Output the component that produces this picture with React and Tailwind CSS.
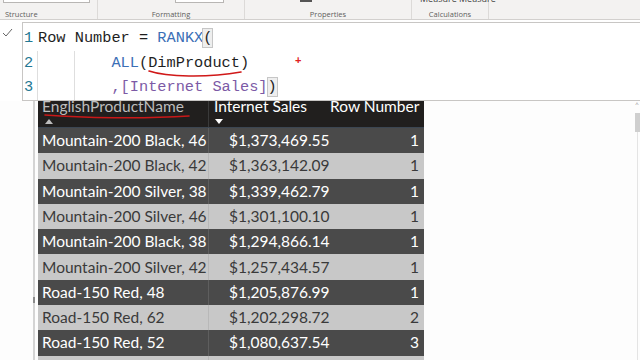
import React from 'react';

const rows = [
    ['Mountain-200 Black, 46', '$1,373,469.55', '1'],
    ['Mountain-200 Black, 42', '$1,363,142.09', '1'],
    ['Mountain-200 Silver, 38', '$1,339,462.79', '1'],
    ['Mountain-200 Silver, 46', '$1,301,100.10', '1'],
    ['Mountain-200 Black, 38', '$1,294,866.14', '1'],
    ['Mountain-200 Silver, 42', '$1,257,434.57', '1'],
    ['Road-150 Red, 48', '$1,205,876.99', '1'],
    ['Road-150 Red, 62', '$1,202,298.72', '2'],
    ['Road-150 Red, 52', '$1,080,637.54', '3'],
    ['Road-150 Red, 56', '$1,055,589.65', '4'],
];

const mono = { fontFamily: '"Liberation Mono", "DejaVu Sans Mono", monospace' };

const Ribbon = () => (
    <div className="h-[20px] bg-[#f3f2f1] border-b border-[#d2d0ce] flex text-[7.5px] text-[#605e5c] overflow-hidden" style={{ fontFamily: '"Open Sans", sans-serif' }}>
        <div className="w-[98px] border-r border-[#dcdad8] flex flex-col justify-between pb-px">
            <div className="ml-[3px] w-[87px] h-[3px] bg-white border-x border-b border-[#b8b6b4]" />
            <div className="pl-[5px] leading-none">Structure</div>
        </div>
        <div className="w-[147px] border-r border-[#dcdad8] flex flex-col justify-between pb-px">
            <div className="ml-[77px] w-[49px] h-[3px] bg-white border-x border-b border-[#b8b6b4]" />
            <div className="text-center leading-none">Formatting</div>
        </div>
        <div className="w-[167px] border-r border-[#dcdad8] flex flex-col justify-between pb-px">
            <div className="ml-[55px] w-[12px] h-[2px] bg-[#555]" />
            <div className="text-center leading-none">Properties</div>
        </div>
        <div className="w-[77px] border-r border-[#dcdad8] flex flex-col justify-between pb-px">
            <div className="-mt-[6px] ml-[8px] text-[9px] text-[#444] leading-none whitespace-nowrap">Measure Measure</div>
            <div className="text-center leading-none">Calculations</div>
        </div>
        <div className="flex-1" />
    </div>
);

const FormulaBar = () => (
    <div className="flex mt-[2px] h-[79px]">
        <div className="w-[22px] pt-[6px] pl-[2px]">
            <svg width="11" height="9" viewBox="0 0 11 9" fill="none" stroke="#666" strokeWidth="1">
                <path d="M1 5 L4 8 L10 1" />
            </svg>
        </div>
        <div className="flex-1 relative bg-white border-t border-l border-b border-[#c8c6c4] pt-[3px] text-[15.3px] leading-[24.7px] text-[#1e1e1e]" style={mono}>
            <div className="flex">
                <div className="w-[15px] pl-[1px] text-[#237893]">1</div>
                <div className="whitespace-pre">
                    Row Number = <span className="text-[#3b6fb6]">RANKX</span><span className="bg-[#eeeeee] outline outline-1 outline-[#c6c6c6]">(</span>
                </div>
            </div>
            <div className="flex">
                <div className="w-[15px] pl-[1px] text-[#237893]">2</div>
                <div className="relative whitespace-pre">
                    <span className="absolute left-[-1px] top-0 bottom-0 w-px bg-[#dedede]" />
                    <span className="absolute left-[36px] top-0 bottom-0 w-px bg-[#dedede]" />
                    {'        '}<span className="text-[#3b6fb6]">ALL</span>(DimProduct)
                </div>
            </div>
            <div className="flex">
                <div className="w-[15px] pl-[1px] text-[#237893]">3</div>
                <div className="relative whitespace-pre">
                    <span className="absolute left-[-1px] top-0 bottom-0 w-px bg-[#dedede]" />
                    <span className="absolute left-[36px] top-0 bottom-0 w-px bg-[#dedede]" />
                    {'        '}<span className="text-[#7c5aa6]">,[Internet Sales]</span><span className="bg-[#eeeeee] outline outline-1 outline-[#c6c6c6]">)</span>
                </div>
            </div>
            {/* hand-drawn marks */}
            <svg className="absolute left-[124px] top-[45px]" width="100" height="12" viewBox="0 0 100 12" fill="none" stroke="#d01818" strokeWidth="1.6" strokeLinecap="round">
                <path d="M2 3 C 20 9, 60 10, 94 4" />
            </svg>
            <div className="absolute left-[272px] top-[32px] text-[11px] leading-none text-[#e02020] font-bold" style={{ fontFamily: '"Liberation Sans", sans-serif' }}>+</div>
        </div>
    </div>
);

const Table = () => (
    <div className="w-[386px] relative" style={{ fontFamily: '"Lato", "Open Sans", sans-serif' }}>
        <div className="h-[27px] bg-[#211f1e] border-b border-[#3c4652] flex text-[15.5px] leading-none overflow-hidden">
            <div className="w-[171px] border-r border-[#3a3a3a] pl-[4px] -mt-[2px] text-[#bdbdbd]">
                <div>EnglishProductName</div>
                <div className="mt-[4px] ml-[3px] w-0 h-0 border-l-[4px] border-r-[4px] border-b-[5px] border-l-transparent border-r-transparent border-b-[#bdbdbd]" />
            </div>
            <div className="w-[116px] pl-[5px] -mt-[2px] text-white">
                <div>Internet Sales</div>
                <div className="mt-[4px] ml-[1px] w-0 h-0 border-l-[4px] border-r-[4px] border-t-[5px] border-l-transparent border-r-transparent border-t-white" />
            </div>
            <div className="flex-1 pl-[5px] -mt-[2px] text-white whitespace-nowrap">Row Number</div>
        </div>
        <svg className="absolute left-[5px] top-[12px]" width="150" height="8" viewBox="0 0 150 8" fill="none" stroke="#c81818" strokeWidth="1.6" strokeLinecap="round">
            <path d="M2 2 C 40 5, 100 6, 146 3" />
        </svg>
        {rows.map((r, i) => {
            const dark = i % 2 === 0;
            return (
                <div key={i} className={`h-[25.3px] flex items-center text-[15.5px] ${dark ? 'bg-[#4a4a4a] text-white' : 'bg-[#c8c8c8] text-[#3a3a3a]'}`}>
                    <div className={`w-[171px] h-full flex items-center pl-[4px] border-r ${dark ? 'border-[#5e5e5e]' : 'border-[#b8b8b8]'}`}>{r[0]}</div>
                    <div className="w-[116px] pl-[20px] whitespace-nowrap">{r[1]}</div>
                    <div className="flex-1 text-right pr-[5px]">{r[2]}</div>
                </div>
            );
        })}
    </div>
);

export default function App() {
    return (
        <div className="w-[640px] h-[360px] overflow-hidden bg-white flex flex-col">
            <Ribbon />
            <FormulaBar />
            <div className="flex-1 flex overflow-hidden bg-[#fdfdfd]">
                <div className="w-[33px]" />
                <div className="w-[2px] bg-[#d4d4d4] flex flex-col">
                    <div className="h-[196px]" />
                    <div className="h-[6px] bg-[#8a8a8a]" />
                </div>
                <div className="w-[3px]" />
                <Table />
                <div className="flex-1" />
                <div className="w-[6px] flex flex-col items-center">
                    <div className="text-[6px] leading-none text-[#888]">^</div>
                    <div className="mt-[6px] w-[5px] h-[19px] bg-[#cfcfcf]" />
                    <div className="flex-1 w-px bg-[#e4e4e4]" />
                </div>
            </div>
        </div>
    );
}
